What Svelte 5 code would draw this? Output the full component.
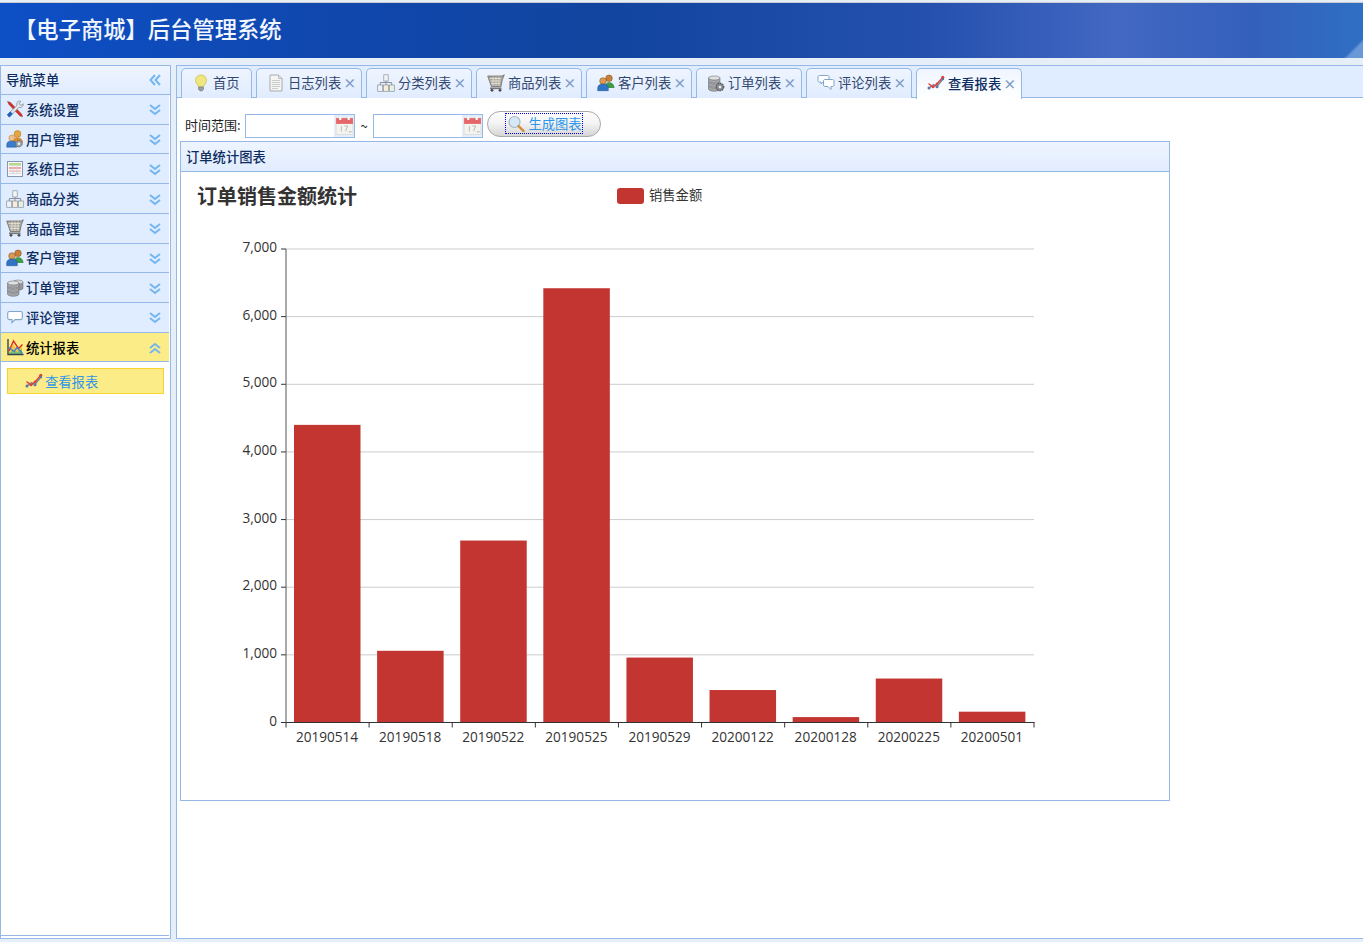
<script>
  const menus = [
    ['系统设置', 'tools'], ['用户管理', 'usergear'], ['系统日志', 'log'], ['商品分类', 'tree'],
    ['商品管理', 'cart'], ['客户管理', 'people'], ['订单管理', 'db'], ['评论管理', 'bubble']
  ];
  const tabs = [
    ['日志列表', 'doc'], ['分类列表', 'tree'], ['商品列表', 'cart'], ['客户列表', 'people'],
    ['订单列表', 'dbgear'], ['评论列表', 'bubbles'], ['查看报表', 'line']
  ];
  const data = [
    ['20190514', 4400], ['20190518', 1060], ['20190522', 2690], ['20190525', 6420], ['20190529', 960],
    ['20200122', 480], ['20200128', 80], ['20200225', 650], ['20200501', 160]
  ];
  const x0 = 286, y0 = 722.5, band = 83.11, k = 473.5 / 7000;
  const yOf = (v) => y0 - v * k;
  const ticks = [0, 1000, 2000, 3000, 4000, 5000, 6000, 7000];
</script>

{#snippet chev(up)}
  <svg class="chev" viewBox="0 0 14 14">
    {#if up}
      <path d="M2 7l5-4 5 4M2 12l5-4 5 4" />
    {:else}
      <path d="M2 2l5 4 5-4M2 7l5 4 5-4" />
    {/if}
  </svg>
{/snippet}

{#snippet icon(name)}
  <svg class="ico" viewBox="0 0 18 18">
    {#if name === 'tools'}
      <path d="M1.500 1.500l3 1 11 11.500 1 2.500-2.500-.5L3 4.500z" fill="#d8312b" stroke="#9a221d" stroke-width=".5" />
      <path d="M13.800 1c-2.200 0-3.800 2.200-2.800 4.500L1.500 14.500l2 2.500L13 7.300c2.300.9 4.500-1 4.300-3.500l-2.300 1.600-2-1.600 1.800-2.300z" fill="#e4e8ed" stroke="#77828e" stroke-width=".7" />
      <path d="M1 14.800l3.400-3.300 2.300 2.200-3.400 3.800z" fill="#1f5fbf" />
    {:else if name === 'usergear'}
      <circle cx="11.500" cy="4" r="3.400" fill="#e9a53d" stroke="#a8701f" stroke-width=".5" />
      <path d="M7 13c0-4 2-5.500 4.500-5.500s5.500 1.500 5.500 5.500z" fill="#d98a2b" />
      <circle cx="5.800" cy="8" r="3" fill="#f0c08a" stroke="#a8701f" stroke-width=".4" />
      <path d="M.8 17.200v-3c0-2.200 2-3.200 5-3.200s5 1 5 3.200v3z" fill="#3a7cc9" stroke="#25558f" stroke-width=".5" />
      <circle cx="13" cy="13.700" r="3.200" fill="#9aa3ad" stroke="#5f6770" stroke-width=".9" stroke-dasharray="1.500 .6" />
      <circle cx="13" cy="13.700" r="1.200" fill="#eef1f4" />
    {:else if name === 'log'}
      <rect x="1.500" y="1.500" width="15" height="15" fill="#f6f8fb" stroke="#8398b3" />
      <rect x="3" y="3" width="12" height="2.600" fill="#b9d88f" />
      <rect x="3" y="7" width="12" height="2" fill="#f3a6a6" />
      <rect x="3" y="10.300" width="12" height="1.700" fill="#f6c1b8" />
      <path d="M3 13.500h12M7 6v8M11 6v8" stroke="#c6d0dc" stroke-width=".7" />
    {:else if name === 'tree'}
      <rect x="6.800" y=".8" width="4.400" height="6.200" fill="#f3f5f7" stroke="#8a929b" stroke-width=".7" />
      <path d="M3.300 11V8.500h11.400V11M9 7v4" fill="none" stroke="#8a929b" />
      <rect x=".7" y="11" width="5" height="6.300" fill="#eef3f8" stroke="#8a929b" stroke-width=".7" />
      <rect x="6.500" y="11" width="5" height="6.300" fill="#f7efdc" stroke="#8a929b" stroke-width=".7" />
      <rect x="12.300" y="11" width="5" height="6.300" fill="#e8f3e4" stroke="#8a929b" stroke-width=".7" />
    {:else if name === 'cart'}
      <path d="M.7 2h14.300l2.300-1.200-2 5-1.300 6.700H4.300z" fill="#aaa59a" stroke="#67635a" stroke-width=".7" />
      <path d="M2.500 4.500h11.800M3.300 7h10.200M4 9.500h9M6 2.500v9.500M9 2.500v9.500M12 2.500v9.500" stroke="#e6e4dc" stroke-width=".8" />
      <path d="M3 14.300h11.500" stroke="#777" stroke-width="1.700" />
      <circle cx="5" cy="16.300" r="1.400" fill="#4c4c4c" />
      <circle cx="13" cy="16.300" r="1.400" fill="#4c4c4c" />
    {:else if name === 'people'}
      <circle cx="12" cy="4.300" r="3.300" fill="#c9803a" stroke="#7a4a1c" stroke-width=".5" />
      <path d="M8 14c0-4 1.500-5.800 4-5.800s5.500 1.800 5.500 5.800z" fill="#3f9a4a" />
      <circle cx="6" cy="7" r="3.300" fill="#dc9a52" stroke="#7a4a1c" stroke-width=".5" />
      <path d="M.7 16.700v-2.500c0-3 2.300-4.200 5.300-4.200s5.300 1.200 5.300 4.200v2.500z" fill="#2f75c4" stroke="#1e4f8a" stroke-width=".5" />
    {:else if name === 'db' || name === 'dbgear'}
      {#if name === 'db'}
        <path d="M7 3v8h6.500c2 0 3.500-.8 3.500-1.800V3z" fill="#96989b" stroke="#66686b" stroke-width=".5" />
        <ellipse cx="12" cy="3" rx="5" ry="2" fill="#d6d8da" stroke="#66686b" stroke-width=".5" />
      {/if}
      {#each [12, 8, 4] as y}
        <path d="M1.500 {y}v3c0 1.300 2.700 2.300 5.700 2.300s5.800-1 5.800-2.300v-3z" fill="#a3a5a8" stroke="#5f6164" stroke-width=".5" />
        <ellipse cx="7.250" cy={y} rx="5.750" ry="2" fill="#dee0e2" stroke="#5f6164" stroke-width=".5" />
      {/each}
      {#if name === 'dbgear'}
        <circle cx="13" cy="13" r="3.700" fill="#8b8e92" stroke="#55585c" stroke-width="1.300" stroke-dasharray="1.600 .8" />
        <circle cx="13" cy="13" r="1.300" fill="#eceef0" />
      {/if}
    {:else if name === 'bubble'}
      <path d="M3.500 3.500h11c1.200 0 1.800.8 1.800 1.800v4.500c0 1-.6 1.800-1.800 1.800H9l-3 3v-3H3.500c-1.200 0-1.800-.8-1.800-1.800V5.300c0-1 .6-1.800 1.800-1.800z" fill="#fff" stroke="#7fa6c9" stroke-width="1.100" />
    {:else if name === 'bubbles'}
      <path d="M2.500 1.500h8c1 0 1.500.6 1.500 1.500v3.500c0 1-.5 1.500-1.500 1.500H6l-2 2V8H2.500C1.500 8 1 7.500 1 6.500V3c0-.9.5-1.500 1.500-1.500z" fill="#fff" stroke="#7fa6c9" />
      <path d="M8 5.500h7.500c1 0 1.500.6 1.500 1.500v4c0 1-.5 1.500-1.500 1.500H14v3l-3-3H8c-1 0-1.500-.5-1.500-1.500V7c0-.9.5-1.500 1.500-1.500z" fill="#fff" stroke="#7fa6c9" />
    {:else if name === 'report'}
      <path d="M3 14l4-8 4 5 5-5v10H3z" fill="#f6c445" />
      <path d="M3 15l5-3 3 2 5-3v5H3z" fill="#7cc06c" />
      <path d="M2 1v15.500h15.500" fill="none" stroke="#33425c" stroke-width="1.400" />
      <path d="M3 13l4.500-10 5 7.500 4-4" fill="none" stroke="#d8312b" stroke-width="1.400" />
      <path d="M3 9.500l5 4 3-4 5.500 6" fill="none" stroke="#3b82d6" stroke-width="1.300" />
    {:else if name === 'line'}
      <path d="M2 14l4.500-3.500 3.500 2 6-7.500" fill="none" stroke="#6c86ad" stroke-width="1.300" />
      <path d="M1.500 9.500l4.500 3.500 4-3 6-7" fill="none" stroke="#e0403a" stroke-width="1.400" />
      <circle cx="2" cy="14" r="1.500" fill="#5a78a6" /><circle cx="10" cy="12.700" r="1.500" fill="#5a78a6" />
      <circle cx="6" cy="12.700" r="1.500" fill="#e0403a" /><circle cx="10" cy="9.800" r="1.300" fill="#e0403a" />
      <circle cx="15.800" cy="3.200" r="1.500" fill="#e0403a" /><circle cx="16" cy="5" r="1.200" fill="#5a78a6" />
    {:else if name === 'bulb'}
      <path d="M9 1c-3.300 0-5.500 2.300-5.500 5.300 0 2.500 2 3.600 2.800 6.200h5.400c.8-2.600 2.800-3.700 2.800-6.200C14.500 3.300 12.300 1 9 1z" fill="#f0e67e" stroke="#c8bb4a" stroke-width=".7" />
      <path d="M6.500 13h5v2.500l-1.500 1.500H8l-1.500-1.500z" fill="#9a9ea3" stroke="#6e7277" stroke-width=".5" />
    {:else if name === 'doc'}
      <path d="M3 1h8.500L15 4.500V17H3z" fill="#f4f4f2" stroke="#a9abad" />
      <path d="M11.500 1v3.500H15" fill="#dedfdf" stroke="#a9abad" stroke-width=".7" />
      <path d="M5 6.500h8M5 8.500h8M5 10.500h8M5 12.500h8M5 14.500h6" stroke="#bfc1c3" stroke-width=".8" />
    {/if}
  </svg>
{/snippet}

{#snippet cal()}
  <span class="calwrap">
    <svg class="cal" viewBox="0 0 18 18">
      <rect x="1" y="2" width="16" height="15.500" fill="#f3f3f0" stroke="#d5d5d2" stroke-width=".6" />
      <rect x="1" y="2" width="16" height="5.500" fill="#e4686a" />
      <rect x="4" y=".8" width="2" height="3" fill="#fff" /><rect x="12" y=".8" width="2" height="3" fill="#fff" />
      <path d="M6 9.500v5M9 9.500h3l-2 5M13 15h3" stroke="#b5b5b2" stroke-width=".9" fill="none" />
    </svg>
  </span>
{/snippet}

<div class="page">
  <header class="top"><h1>【电子商城】后台管理系统</h1></header>
  <div class="main">
    <aside class="side">
      <div class="side-title"><span>导航菜单</span>
        <svg class="chev" viewBox="0 0 14 14"><path d="M7 2L2.500 7 7 12M12 2L7.500 7l4.500 5" /></svg>
      </div>
      <div class="acc">
        {#each menus as [label, ic]}
          <div class="row">{@render icon(ic)}<span class="lbl">{label}</span>{@render chev(false)}</div>
        {/each}
        <div class="row on">{@render icon('report')}<span class="lbl">统计报表</span>{@render chev(true)}</div>
        <div class="sub">
          <div class="subitem">{@render icon('line')}<span class="subt">查看报表</span></div>
        </div>
      </div>
    </aside>
    <section class="work">
      <nav class="tabs">
        <div class="tab first">{@render icon('bulb')}<span class="tt">首页</span></div>
        {#each tabs as [label, ic], i}
          <div class="tab" class:active={i === tabs.length - 1}>
            {@render icon(ic)}<span class="tt">{label}</span><span class="x">×</span>
          </div>
        {/each}
      </nav>
      <div class="content">
        <div class="toolbar">
          <span class="range">时间范围:</span>
          <div class="inp">{@render cal()}</div>
          <span class="tilde">~</span>
          <div class="inp">{@render cal()}</div>
          <button class="btn" type="button">
            <span class="focus">
              <svg class="ico" viewBox="0 0 18 18">
                <circle cx="7.500" cy="7" r="5.500" fill="#d7e9f7" stroke="#a7b6c4" stroke-width="1.200" />
                <path d="M11.500 11l5 5" stroke="#d28a35" stroke-width="2.400" stroke-linecap="round" />
              </svg>
              <span>生成图表</span>
            </span>
          </button>
        </div>
        <div class="panel">
          <div class="phead">订单统计图表</div>
          <svg class="chart" viewBox="181 172 988 628">
            <text x="197" y="204" class="ctitle">订单销售金额统计</text>
            <rect x="617" y="188" width="27" height="16" rx="3" fill="#c23531" />
            <text x="649" y="200" class="lg">销售金额</text>
            {#each ticks as t}
              {#if t > 0}<line x1={x0} x2="1034" y1={yOf(t)} y2={yOf(t)} stroke="#ccc" />{/if}
              <line x1="281" x2={x0} y1={yOf(t)} y2={yOf(t)} stroke="#333" />
              <text x="277" y={yOf(t) + 3} text-anchor="end" class="ax">{t.toLocaleString('en-US')}</text>
            {/each}
            {#each data as [d, v], i}
              <rect x={x0 + band * i + 8} y={yOf(v)} width="66.500" height={y0 - yOf(v)} fill="#c23531" />
              <text x={x0 + band * i + band / 2 - .5} y="742" text-anchor="middle" class="ax">{d}</text>
            {/each}
            <line x1={x0} x2={x0} y1="249" y2={y0} stroke="#555" />
            <line x1={x0} x2="1034.500" y1={y0} y2={y0} stroke="#333" />
            {#each Array(10) as _, i}
              <line x1={x0 + band * i} x2={x0 + band * i} y1={y0} y2={y0 + 5} stroke="#333" />
            {/each}
          </svg>
        </div>
      </div>
    </section>
  </div>
</div>

<style>
  :global(body) {
    margin: 0;
    background: #e6eef8;
    font-family: "Noto Sans CJK SC", "Noto Sans", sans-serif;
    overflow: hidden;
  }
  .page { height: 942px; display: flex; flex-direction: column; }
  .top {
    height: 55px;
    box-sizing: content-box;
    margin-top: 2px;
    border-top: 1px solid #c9cdd3;
    display: flex;
    align-items: center;
    background:
      linear-gradient(135deg, transparent 98.6%, rgba(190,215,245,.4) 98.9%),
      linear-gradient(90deg, #0d4fc6 0%, #1047ad 25%, #11459f 45%, #2550ae 68%, #4268c2 82%, #3460bc 92%, #2f6fc4 100%);
    flex: none;
  }
  h1 {
    margin: 0 0 6px 14px;
    font-size: 22.300px;
    font-weight: 500;
    color: #f2f6fe;
  }
  .main { display: flex; gap: 5px; padding-top: 7px; height: 881px; box-sizing: border-box; flex: none; }
  .side {
    width: 171px;
    flex: none;
    box-sizing: border-box;
    border: 1px solid #95b8e7;
    background: #fff;
    display: flex;
    flex-direction: column;
    padding-bottom: 2px;
  }
  .side-title {
    height: 29px;
    flex: none;
    box-sizing: border-box;
    display: flex;
    align-items: center;
    padding: 0 8px 1px 5px;
    justify-content: space-between;
    background: linear-gradient(#eff5ff, #e0ecff);
    border-bottom: 1px solid #95b8e7;
    font-size: 13.300px;
    font-weight: 500;
    color: #0e2d5f;
  }
  .acc { flex: 1; margin-right: 1px; border-bottom: 1px solid #95b8e7; }
  .row {
    height: 29.720px;
    box-sizing: border-box;
    display: flex;
    align-items: center;
    padding: 0 7px 0 5px;
    background: #e0ecff;
    border-bottom: 1px solid #95b8e7;
    font-size: 13.300px;
    font-weight: 500;
    color: #0e2d5f;
  }
  .row.on { background: #fbec88; color: #000; }
  .row .chev { margin-top: 2px; }
  .lbl { flex: 1; margin-left: 2px; }
  .ico { width: 18px; height: 18px; flex: none; }
  .chev { width: 14px; height: 14px; flex: none; }
  .chev path { fill: none; stroke: #74b6ef; stroke-width: 2; }
  .sub { padding: 6px 5px 0 6px; }
  .subitem {
    height: 26px;
    box-sizing: border-box;
    background: #fbec88;
    border: 1px solid #fad42e;
    display: flex;
    align-items: center;
    padding-left: 17px;
    font-size: 13.300px;
    color: #2f96ea;
  }
  .subt { margin-left: 2px; }
  .work {
    flex: 1;
    box-sizing: border-box;
    border: 1px solid #95b8e7;
    border-right: 0;
    background: #fff;
    display: flex;
    flex-direction: column;
  }
  .tabs {
    height: 32px;
    flex: none;
    box-sizing: border-box;
    display: flex;
    gap: 4px;
    padding: 2px 0 0 4px;
    background: #e0ecff;
    border-bottom: 1px solid #95b8e7;
  }
  .tab {
    width: 106px;
    height: 30px;
    box-sizing: border-box;
    display: flex;
    align-items: center;
    padding: 0 0 2px 10px;
    border: 1px solid #95b8e7;
    border-bottom: 0;
    border-radius: 5px 5px 0 0;
    background: linear-gradient(#eff5ff, #e0ecff);
    color: #0e2d5f;
    font-size: 13.300px;
  }
  .tab.first { width: 71px; }
  .tab.active { background: linear-gradient(#eff5ff, #fff); height: 31px; }
  .tt { margin-left: 3px; color: #33486e; }
  .active .tt { color: #0e2d5f; font-weight: 500; }
  .x { margin-left: 2px; color: #7f9cc7; font-size: 13px; font-weight: 700; line-height: 1; }
  .content { flex: 1; padding: 12px 0 0 3px; }
  .toolbar { display: flex; align-items: center; height: 31px; font-size: 13px; color: #222; padding-bottom: 4px; box-sizing: border-box; }
  .range { margin: 2px 3px 0 5px; width: 57px; white-space: nowrap; }
  .inp {
    width: 110px;
    height: 24px;
    margin-top: 4px;
    box-sizing: border-box;
    border: 1px solid #95b8e7;
    background: #fff;
    display: flex;
    justify-content: flex-end;
  }
  .calwrap { width: 20px; background: #e6eefa; display: flex; align-items: center; justify-content: center; }
  .cal { width: 19px; height: 19px; }
  .tilde { width: 18px; text-align: center; margin-top: 3px; }
  .btn {
    margin: 0 0 0 4px;
    width: 114px;
    height: 26px;
    box-sizing: border-box;
    padding: 0;
    border: 1px solid #a9a9a9;
    border-radius: 13px;
    background: linear-gradient(#fdfdfd 0%, #f4f4f4 45%, #d6d6d6 100%);
    display: flex;
    align-items: center;
    justify-content: center;
    font: inherit;
    font-size: 13.300px;
    color: #2f96ea;
  }
  .focus {
    display: flex;
    align-items: center;
    gap: 3px;
    outline: 1px dotted #0000e0;
    height: 19px;
    line-height: 17px;
    padding: 0 0 0 1px;
  }
  .panel {
    width: 990px;
    height: 660px;
    box-sizing: border-box;
    border: 1px solid #95b8e7;
  }
  .phead {
    height: 30px;
    box-sizing: border-box;
    background: linear-gradient(#eff5ff, #e0ecff);
    border-bottom: 1px solid #95b8e7;
    display: flex;
    align-items: center;
    padding-left: 5px;
    font-size: 13.300px;
    font-weight: 500;
    color: #0e2d5f;
  }
  .chart { display: block; width: 988px; height: 628px; }
  .ctitle { font-size: 20px; font-weight: 700; fill: #333; }
  .lg { font-size: 13.300px; fill: #333; }
  .ax { font-family: "Open Sans", "Noto Sans", sans-serif; font-size: 13.600px; fill: #333; }
</style>
